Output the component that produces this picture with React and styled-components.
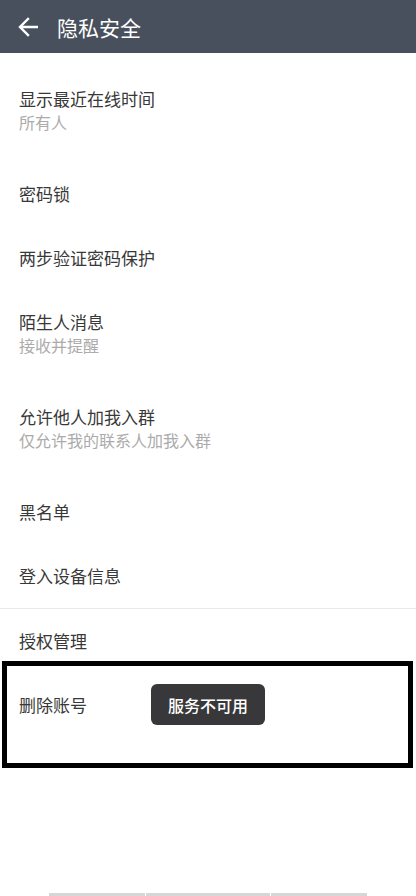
import React from "react";
import styled, { createGlobalStyle } from "styled-components";

const Global = createGlobalStyle`
  html, body { margin: 0; padding: 0; background: #ffffff; }
  body { font-family: "Noto Sans CJK SC", "Noto Sans", sans-serif; }
  * { box-sizing: border-box; }
`;

const Page = styled.div`
  position: relative;
  width: 416px;
  height: 896px;
  background: #ffffff;
  display: flex;
  flex-direction: column;
  overflow: hidden;
`;

const Header = styled.header`
  height: 53px;
  flex: 0 0 53px;
  background: #48505d;
  display: flex;
  align-items: center;
  padding-left: 18px;
  gap: 19px;
`;

const BackButton = styled.button`
  width: 20px;
  height: 20px;
  padding: 0;
  border: 0;
  background: transparent;
  display: flex;
  align-items: center;
  justify-content: center;
`;

const Title = styled.h1`
  margin: 0;
  font-size: 21px;
  font-weight: 400;
  color: #ffffff;
  line-height: 28px;
`;

const List = styled.main`
  padding-top: 14px;
  display: flex;
  flex-direction: column;
`;

const Row = styled.div`
  height: ${(p) => (p.$double ? 95 : 64)}px;
  padding: 20px 19px 0;
  display: flex;
  flex-direction: column;
`;

const RowTitle = styled.div`
  font-size: 17px;
  line-height: 23px;
  color: #383838;
`;

const RowSub = styled.div`
  font-size: 16px;
  line-height: 24px;
  color: #ababab;
`;

const Divider = styled.div`
  height: 1px;
  background: #e9e9e9;
`;

const Frame = styled.div`
  position: absolute;
  left: 2px;
  top: 661px;
  width: 411px;
  height: 107px;
  border: 5px solid #000000;
  pointer-events: none;
`;

const Toast = styled.div`
  position: absolute;
  top: 684px;
  left: 50%;
  transform: translateX(-50%);
  width: 114px;
  height: 41px;
  border-radius: 6px;
  background: #38383a;
  color: #ffffff;
  font-size: 16px;
  font-weight: 500;
  display: flex;
  align-items: center;
  justify-content: center;
`;

const BottomBar = styled.div`
  margin-top: auto;
  height: 3px;
  display: flex;
  justify-content: center;
  gap: 1px;
`;

const BarPiece = styled.div`
  width: ${(p) => p.$w}px;
  background: #d6d5d8;
`;

const items = [
  { title: "显示最近在线时间", sub: "所有人" },
  { title: "密码锁" },
  { title: "两步验证密码保护" },
  { title: "陌生人消息", sub: "接收并提醒" },
  { title: "允许他人加我入群", sub: "仅允许我的联系人加我入群" },
  { title: "黑名单" },
  { title: "登入设备信息" },
  { divider: true },
  { title: "授权管理" },
  { title: "删除账号" },
];

export default function App() {
  return (
    <Page>
      <Global />
      <Header>
        <BackButton aria-label="返回">
          <svg width="20" height="20" viewBox="0 0 20 20" fill="none">
            <path
              d="M19 10H2.5M10 2L2 10l8 8"
              stroke="#ffffff"
              strokeWidth="2.4"
              strokeLinecap="square"
            />
          </svg>
        </BackButton>
        <Title>隐私安全</Title>
      </Header>
      <List>
        {items.map((it, i) =>
          it.divider ? (
            <Divider key={i} />
          ) : (
            <Row key={i} $double={!!it.sub}>
              <RowTitle>{it.title}</RowTitle>
              {it.sub && <RowSub>{it.sub}</RowSub>}
            </Row>
          )
        )}
      </List>
      <BottomBar>
        <BarPiece $w={96} />
        <BarPiece $w={124} />
        <BarPiece $w={96} />
      </BottomBar>
      <Frame />
      <Toast>服务不可用</Toast>
    </Page>
  );
}
